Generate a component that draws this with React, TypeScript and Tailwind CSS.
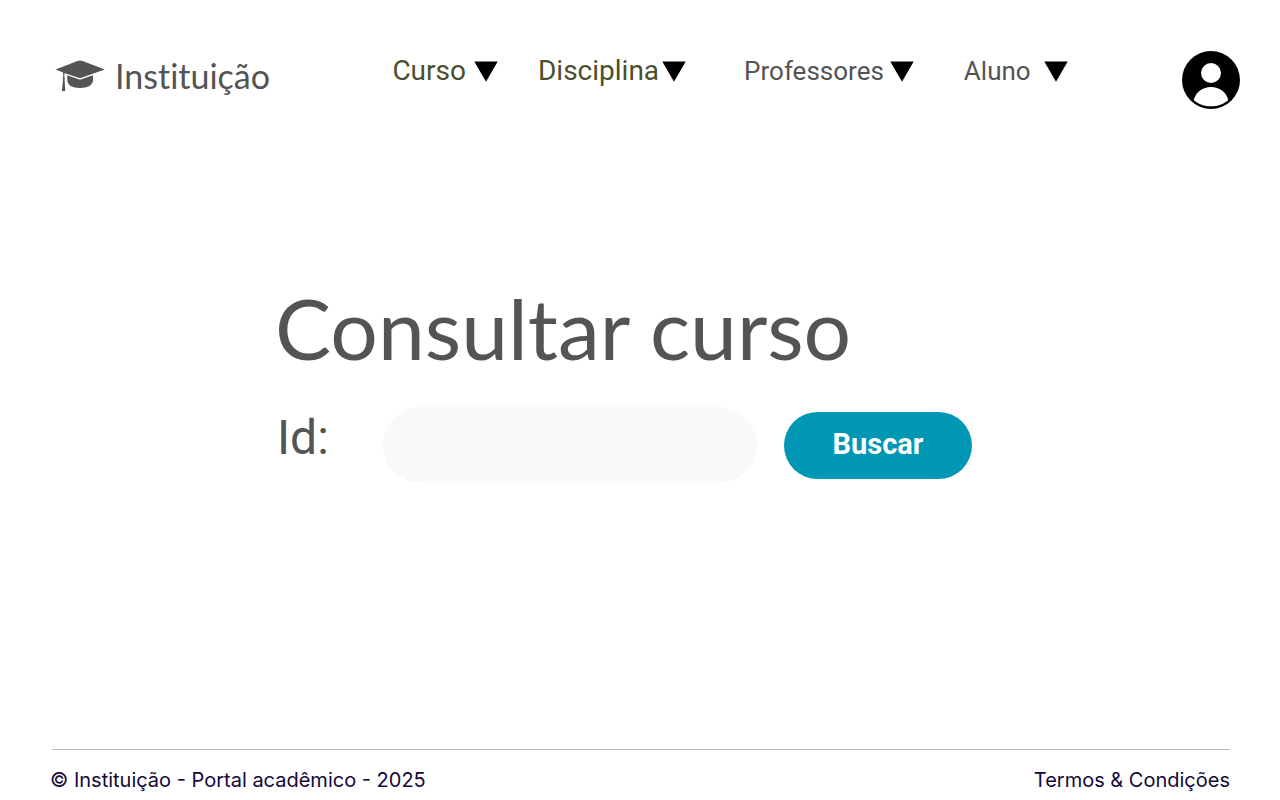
import React from "react";

type MenuProps = { label: string; className: string };

function Caret() {
  return (
    <svg viewBox="0 0 24 21" className="h-[21px] w-6 shrink-0" aria-hidden="true">
      <path d="M0.3 0.5H23.7L12 20.8Z" fill="#000" />
    </svg>
  );
}

function MenuButton({ label, className }: MenuProps) {
  return (
    <button type="button" className={`flex items-center ${className}`}>
      <span>{label}</span>
      <Caret />
    </button>
  );
}

function Cap() {
  return (
    <svg viewBox="0 0 50 32" className="h-8 w-[50px] shrink-0" fill="#545454" aria-hidden="true">
      <path d="M0.5 9.6L22.5 1Q25 0.2 27.5 1L49.8 9.6L25 18.2L9.4 12.9V13.8L8.2 13.4V12.4Z" />
      <path d="M12.3 15.2L25 19.8L38 15.2V20C38 25 33 28 25 28S12.3 25 12.3 20Z" />
      <path d="M8.2 12H9.4V17.2Q10.4 18.3 9.6 19.6L10.3 31H6.9L8 19.6Q7.2 18.3 8.2 17.2Z" />
    </svg>
  );
}

function Avatar() {
  return (
    <svg viewBox="0 0 58 58" className="size-[58px]" aria-hidden="true">
      <circle cx="29" cy="29" r="29" fill="#000" />
      <circle cx="29" cy="22" r="10" fill="#fff" />
      <path d="M11.7 49C14 41 20.5 36 29 36S44 41 46.3 49C41.5 53.3 35.5 55.3 29 55.3S16.5 53.3 11.7 49Z" fill="#fff" />
    </svg>
  );
}

export default function App() {
  return (
    <div className="flex min-h-screen flex-col bg-white font-['Roboto',sans-serif] text-[#545454]">
      <header className="flex items-start justify-between pt-[51px] pr-10 pl-[55px]">
        <a href="#" className="flex items-center gap-2.5 pt-1 font-['Lato',sans-serif] text-[34px] leading-[42px] [font-variant-ligatures:none]">
          <Cap />
          <span>Instituição</span>
        </a>
        <nav className="flex items-start pl-2 leading-10">
          <MenuButton label="Curso" className="mr-10 gap-2 text-[28px] text-[#4b4f2c]" />
          <MenuButton label="Disciplina" className="mr-[58px] gap-[3px] text-[28px] text-[#4b4f2c]" />
          <MenuButton label="Professores" className="mr-[50px] gap-1.5 text-[26px]" />
          <MenuButton label="Aluno" className="gap-[13px] text-[26px]" />
        </nav>
        <button type="button" aria-label="Perfil">
          <Avatar />
        </button>
      </header>

      <main className="flex-1 pt-[173px] pl-[275px]">
        <h1 className="font-['Lato',sans-serif] text-[84px] leading-[92px]">Consultar curso</h1>
        <form className="mt-[33px] flex items-center pl-0.5" onSubmit={(e) => e.preventDefault()}>
          <label htmlFor="course-id" className="w-[106px] pb-3.5 text-5xl">
            Id:
          </label>
          <input
            id="course-id"
            type="text"
            className="h-[76px] w-[374px] rounded-[38px] bg-[#f9f9f9] px-8 text-3xl outline-none"
          />
          <button
            type="submit"
            className="ml-[27px] h-[67px] w-[188px] rounded-[34px] bg-[#0097b5] text-[29px] font-bold text-white"
          >
            Buscar
          </button>
        </form>
      </main>

      <footer className="pr-[50px] pl-[50px] font-['Inter',sans-serif] text-[20px] leading-6 text-[#14083a]">
        <hr className="ml-0.5 border-[#b9b8c0]" />
        <div className="flex justify-between pt-[18px] pb-2">
          <p>© Instituição - Portal acadêmico - 2025</p>
          <a href="#">Termos &amp; Condições</a>
        </div>
      </footer>
    </div>
  );
}
